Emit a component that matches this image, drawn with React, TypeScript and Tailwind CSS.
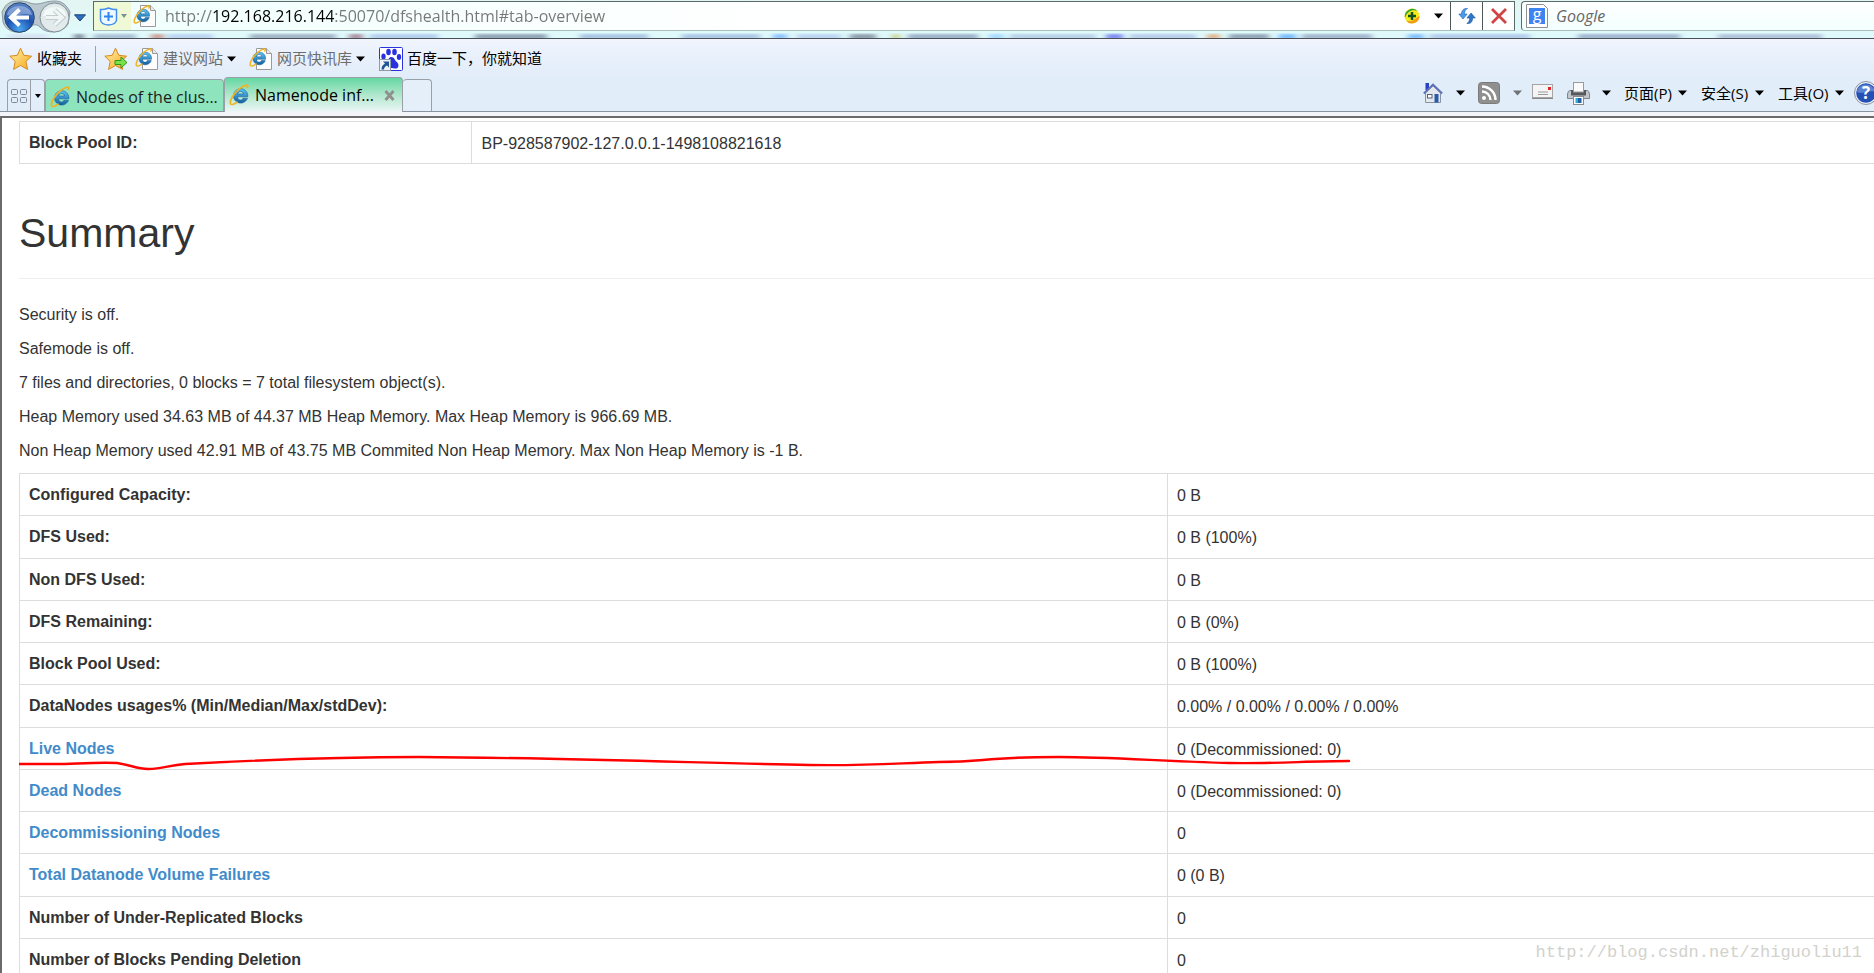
import type { ReactNode } from "react";

type Row = {
  label: string;
  value: string;
  href?: string;
};

const paragraphs = [
  "Security is off.",
  "Safemode is off.",
  "7 files and directories, 0 blocks = 7 total filesystem object(s).",
  "Heap Memory used 34.63 MB of 44.37 MB Heap Memory. Max Heap Memory is 966.69 MB.",
  "Non Heap Memory used 42.91 MB of 43.75 MB Commited Non Heap Memory. Max Non Heap Memory is -1 B.",
];

const rows: Row[] = [
  { label: "Configured Capacity:", value: "0 B" },
  { label: "DFS Used:", value: "0 B (100%)" },
  { label: "Non DFS Used:", value: "0 B" },
  { label: "DFS Remaining:", value: "0 B (0%)" },
  { label: "Block Pool Used:", value: "0 B (100%)" },
  { label: "DataNodes usages% (Min/Median/Max/stdDev):", value: "0.00% / 0.00% / 0.00% / 0.00%" },
  { label: "Live Nodes", value: "0 (Decommissioned: 0)", href: "#tab-datanode" },
  { label: "Dead Nodes", value: "0 (Decommissioned: 0)", href: "#tab-datanode" },
  { label: "Decommissioning Nodes", value: "0", href: "#tab-datanode" },
  { label: "Total Datanode Volume Failures", value: "0 (0 B)", href: "#tab-datanode-volume-failures" },
  { label: "Number of Under-Replicated Blocks", value: "0" },
  { label: "Number of Blocks Pending Deletion", value: "0" },
];

// blurred desktop behind the glass frame: x, width, colour
const glassSpots: [number, number, string][] = [
  [8, 40, "#d5dff0"], [74, 10, "#6f7a8c"], [94, 42, "#9fb4cd"], [151, 13, "#c98b80"],
  [167, 46, "#b3cdf0"], [250, 86, "#93a5bb"], [349, 14, "#a07a90"], [370, 68, "#a9c4ec"],
  [475, 72, "#8093a6"], [580, 68, "#9dbadf"], [682, 78, "#a0bce0"], [773, 14, "#7ab8ff"],
  [797, 44, "#b4cdf0"], [850, 26, "#7d8c9c"], [892, 8, "#c5cc80"], [908, 70, "#8ea3bf"],
  [989, 15, "#9ad4ff"], [1010, 86, "#b0c9e6"], [1106, 17, "#6b74f0"], [1130, 66, "#b0c4e8"],
  [1207, 13, "#e0a878"], [1229, 40, "#8193a8"], [1279, 17, "#62b0ff"], [1302, 70, "#95a9c4"],
  [1408, 16, "#6fb4ff"], [1430, 100, "#a8c2e8"], [1578, 102, "#93a8c8"], [1718, 104, "#a5b8d4"],
];

function Caret({ className = "text-black" }: { className?: string }) {
  return (
    <svg className={`shrink-0 ${className}`} width="9" height="6" viewBox="0 0 9 6" aria-hidden="true">
      <path d="M0 0.5h9L4.500 5.500z" fill="currentColor" />
    </svg>
  );
}

function IeMark() {
  return (
    <>
      <path d="M18.500 14.200A7.200 7.200 0 1 1 18.800 10.800V12.800H8.400C8.800 16.600 13 17 14 14.200zM8.500 10H14.500C14.200 6.600 9 6.600 8.500 10z" fill="url(#ieBlue)" stroke="#17629f" strokeWidth=".6" />
      <path d="M18 3.500C21 .2 15.500 .4 10.500 4.600C4.500 9.500 .2 17 1.600 19.800C2.500 21.400 5.500 20 8 18.200" fill="none" stroke="#f0b323" strokeWidth="1.700" strokeLinecap="round" />
    </>
  );
}

function IeIcon() {
  return (
    <svg className="shrink-0" width="22" height="22" viewBox="0 0 22 22" aria-hidden="true">
      <IeMark />
    </svg>
  );
}

function IePageIcon() {
  return (
    <svg className="shrink-0" width="24" height="24" viewBox="0 0 24 24" aria-hidden="true">
      <path d="M7.500 1.500h10l5 5v16h-15z" fill="#fdfdfd" stroke="#9a9a9a" />
      <path d="M17.500 1.500v5h5" fill="#e8e8e8" stroke="#9a9a9a" />
      <g transform="translate(0 1) scale(.88)">
        <IeMark />
      </g>
    </svg>
  );
}

function StarIcon({ arrow = false }: { arrow?: boolean }) {
  return (
    <svg className="shrink-0" width="24" height="24" viewBox="0 0 24 24" aria-hidden="true">
      <path d="M11.500 1.200L14.800 8.300L22.600 9.200L16.900 14.400L18.600 22.400L11.500 18.500L4.600 22.400L6.200 14.400L.8 9.200L8.300 8.300z" fill="url(#starGold)" stroke="#d58a1c" strokeLinejoin="round" />
      {arrow && (
        <path d="M11 13.500h6v-3.500l6 5.500l-6 5.500v-3.500h-6z" fill="#7be04a" stroke="#2f9a20" strokeLinejoin="round" />
      )}
    </svg>
  );
}

function BaiduIcon() {
  return (
    <svg className="shrink-0" width="24" height="24" viewBox="0 0 24 24" aria-hidden="true">
      <rect x=".5" y=".5" width="23" height="23" rx="1" fill="#fff" stroke="#2a32e0" />
      <g fill="#2a32e0">
        <ellipse cx="9.500" cy="5" rx="2.300" ry="3.200" />
        <ellipse cx="15.500" cy="5" rx="2.300" ry="3.200" />
        <ellipse cx="4.500" cy="9.500" rx="2.200" ry="2.900" />
        <ellipse cx="20" cy="10" rx="2.200" ry="2.900" />
        <path d="M12.300 10c3 0 3.200 3 5.500 5s2.400 6-.6 6.500c-2.200.4-3-.5-5-.5s-4 1-5.700-.5c-2-2-.6-4.500 1.500-6.300C9.800 12.600 9.800 10 12.300 10z" />
      </g>
      <rect x=".5" y="12.500" width="11" height="11" fill="#eef3fa" stroke="#8f99a8" />
      <path d="M4 14.500h6v6l-2-2c-2 1-3 2-3 4H2.500c0-3 1-4.500 3.500-6z" fill="#1f5796" />
    </svg>
  );
}

function ToolbarMenu({ children, className }: { children: ReactNode; className: string }) {
  return (
    <button type="button" className={`flex shrink-0 items-center justify-between ${className}`}>
      {children}
      <Caret />
    </button>
  );
}

function AddressRow() {
  return (
    <div className="relative flex h-[38px] items-start bg-gradient-to-b from-[#e4f5f2] to-[#dffafc]">
      <svg className="absolute inset-x-0 bottom-0 h-[7px] w-full" aria-hidden="true">
        <g filter="url(#glassBlur)" opacity=".8">
          {glassSpots.map(([x, w, fill]) => (
            <rect key={x} x={x} y="3" width={w} height="5" fill={fill} />
          ))}
        </g>
      </svg>

      <div className="relative flex h-[34px] w-[93px] shrink-0 items-start">
        <svg className="absolute inset-0" width="93" height="34" viewBox="0 0 93 34" aria-hidden="true">
          <path d="M2 12C6 2 12 1 19 1C28 1 30 4 36 4S46 1 55 1C63 1 67 6 70 12L68 24C62 34 46 34 40 27C36 24 34 24 31 27C22 36 6 33 3 22z" fill="#b9c7ce" stroke="#8c9ba5" />
        </svg>
        <button type="button" aria-label="Back" className="relative ml-1 mt-0.5">
          <svg width="31" height="31" viewBox="0 0 31 31" aria-hidden="true">
            <circle cx="15.500" cy="15.500" r="14.800" fill="url(#backBlue)" stroke="#2b4568" />
            <path d="M3 13C5 1 26 1 28 13C20 10 11 16 3 13z" fill="#fff" opacity=".35" />
            <path d="M15.500 7.500L7 15.500L15.500 23.500M8 15.500H25" fill="none" stroke="#fff" strokeWidth="4" />
          </svg>
        </button>
        <button type="button" aria-label="Forward" className="relative ml-1 mt-0.5">
          <svg width="31" height="31" viewBox="0 0 31 31" aria-hidden="true">
            <circle cx="15.500" cy="15.500" r="14.500" fill="#e2eaec" stroke="#808d93" />
            <path d="M4 14C5 2 26 2 27 14z" fill="#f3f8f8" />
            <path d="M15.500 8L23.500 15.500L15.500 23M22.500 15.500H7" fill="none" stroke="#c3cccf" strokeWidth="5" />
            <path d="M15.500 8L23.500 15.500L15.500 23M22.500 15.500H7" fill="none" stroke="#f0f5f5" strokeWidth="3" />
          </svg>
        </button>
        <button type="button" aria-label="Recent pages" className="relative ml-1 mt-3.5">
          <svg width="12" height="8" viewBox="0 0 12 8" aria-hidden="true">
            <path d="M.5 .8h11L6 7z" fill="#2f6fc0" stroke="#173f78" strokeLinejoin="round" />
          </svg>
        </button>
      </div>

      <div className="relative mt-px flex h-[30px] min-w-0 flex-1 items-center border border-[#5b6b6b] border-b-[#a9bdb9] bg-gradient-to-r from-[#effffd] via-white to-white">
        <button type="button" aria-label="Site safety" className="flex h-full w-[37px] shrink-0 items-center justify-between bg-[#eff9d6] pl-[5px] pr-1">
          <svg width="19" height="19" viewBox="0 0 19 19" aria-hidden="true">
            <path d="M1.500 2.500C5 3 7 2 9.500 1C12 2 14 3 17.500 2.500V13Q17 17.500 9.500 18Q2 17.500 1.500 13z" fill="#eef8ff" stroke="#3f8ef0" strokeWidth="1.500" />
            <path d="M9.500 5v9M5 9.500h9" stroke="#2f84ee" strokeWidth="2" />
          </svg>
          <svg width="6" height="4" viewBox="0 0 6 4" aria-hidden="true">
            <path d="M0 0h6L3 4z" fill="#819191" />
          </svg>
        </button>
        <div className="ml-0.5 flex shrink-0">
          <IePageIcon />
        </div>
        <input
          type="text"
          aria-label="Address"
          defaultValue="http://192.168.216.144:50070/dfshealth.html#tab-overview"
          className="ml-2 h-[26px] min-w-0 flex-1 bg-[linear-gradient(to_right,#777_0,#777_47px,#000_47px,#000_170px,#777_170px)] bg-clip-text text-base text-transparent caret-black outline-none"
        />
        <button type="button" aria-label="Compatibility view" className="shrink-0">
          <svg width="16" height="16" viewBox="0 0 16 16" aria-hidden="true">
            <circle cx="8" cy="8" r="7.500" fill="#f5ec1c" />
            <path d="M2 12.500A7.500 7.500 0 0 0 15.500 8C12 9 10 15 2 12.500z" fill="#f29a1a" />
            <path d="M1 10A7.500 7.500 0 0 1 13.500 3C9 1 3 3 1 10z" fill="#35a432" />
            <path d="M8 4v8M4 8h8" stroke="#14531d" strokeWidth="2.500" />
          </svg>
        </button>
        <button type="button" aria-label="Show address history" className="flex h-full w-[30px] shrink-0 items-center justify-end pr-[7px]">
          <Caret />
        </button>
        <button type="button" aria-label="Refresh" className="flex h-full w-8 shrink-0 items-center justify-center border-l border-[#4d5858]">
          <svg width="18" height="18" viewBox="0 0 18 18" aria-hidden="true">
            <path d="M9.500 1.500C5.500 1 3.500 3.500 3.500 7H.8L5 12L9.200 7H6.500C6.500 4.500 7.200 2.800 9.500 1.500z" fill="#4a9be8" stroke="#1f66b5" strokeWidth=".6" />
            <path d="M8.800 16.500C13 17 14.600 14.500 14.600 11H17.300L13.100 6L8.900 11H11.600C11.600 13.500 11 15.200 8.800 16.500z" fill="#2f78c8" stroke="#1b559d" strokeWidth=".6" />
          </svg>
        </button>
        <button type="button" aria-label="Stop" className="flex h-full w-8 shrink-0 items-center justify-center border-l border-[#4d5858]">
          <svg width="18" height="18" viewBox="0 0 18 18" aria-hidden="true">
            <path d="M2 2L16 16M16 2L2 16" stroke="#cf4444" strokeWidth="2.800" />
          </svg>
        </button>
      </div>

      <div className="relative ml-1.5 mt-px flex h-[30px] w-[353px] shrink-0 items-center rounded-l-sm border border-r-0 border-[#5b6b6b] border-b-[#a9bdb9] bg-gradient-to-b from-white to-[#f2fffe] pl-1">
        <svg className="shrink-0" width="22" height="24" viewBox="0 0 22 24" aria-hidden="true">
          <path d="M.5 .5h17l4 4v19h-21z" fill="#fff" stroke="#8f8f8f" />
          <rect x="3" y="4" width="16" height="16" fill="#3f82f1" />
          <text x="11" y="16" textAnchor="middle" fontSize="16" fill="#fff" fontFamily="Open Sans, sans-serif">g</text>
        </svg>
        <input
          type="search"
          aria-label="Search"
          placeholder="Google"
          className="ml-2 min-w-0 flex-1 bg-transparent text-base italic outline-none placeholder:text-[#666]"
        />
      </div>
    </div>
  );
}

function FavoritesBar() {
  return (
    <div className="flex h-10 items-center border-t border-[#4b4f55] bg-gradient-to-b from-[#f1f5fd] via-[#e8f0fb] to-[#e1edf9] pl-[9px] text-[15px] text-[#6d6d6d]">
      <button type="button" className="flex items-center gap-1 text-black">
        <StarIcon />
        收藏夹
      </button>
      <div className="ml-[13px] h-[26px] w-px bg-[#9aa2ad]" />
      <button type="button" aria-label="Add to favorites bar" className="ml-2">
        <StarIcon arrow />
      </button>
      <button type="button" className="ml-[7px] flex items-center gap-1">
        <IePageIcon />
        建议网站
        <Caret />
      </button>
      <button type="button" className="ml-[13px] flex items-center gap-1">
        <IePageIcon />
        网页快讯库
        <Caret />
      </button>
      <a href="#baidu" className="ml-[14px] flex items-center gap-1 text-black">
        <BaiduIcon />
        百度一下，你就知道
      </a>
    </div>
  );
}

function CommandBar() {
  return (
    <div className="-mr-1 ml-auto flex h-9 shrink-0 items-center text-[15px] text-black">
      <ToolbarMenu className="w-[42px]">
        <svg width="20" height="22" viewBox="0 0 20 22" aria-hidden="true">
          <path d="M2.500 1h3.500v7H2.500z" fill="#2840c8" />
          <path d="M2.500 11L10 4L17.500 11V20.500H2.500z" fill="#e3e7ee" stroke="#8a93a6" />
          <path d="M.8 11.500L10 2.500L19.200 11.500" fill="none" stroke="#5f70b8" strokeWidth="1.800" />
          <rect x="11.500" y="12" width="4" height="8.500" fill="#2a5ba8" />
          <rect x="4.500" y="12.500" width="4.500" height="3.500" fill="#fff" stroke="#55606f" />
        </svg>
      </ToolbarMenu>
      <button type="button" aria-label="Feeds" className="ml-[13px] flex w-11 items-center justify-between">
        <svg width="22" height="22" viewBox="0 0 22 22" aria-hidden="true">
          <rect x=".5" y=".5" width="21" height="21" rx="3" fill="#8f8f8f" stroke="#7b7b7b" />
          <circle cx="6" cy="16" r="2" fill="#fff" />
          <path d="M4 9.500A8.500 8.500 0 0 1 12.500 18M4 4.500A13.500 13.500 0 0 1 17.500 18" fill="none" stroke="#fff" strokeWidth="2.400" />
        </svg>
        <Caret className="text-[#6f7377]" />
      </button>
      <button type="button" aria-label="Read mail" className="-mt-1 ml-2.5">
        <svg width="21" height="15" viewBox="0 0 21 15" aria-hidden="true">
          <rect x=".5" y=".5" width="20" height="13" fill="#f4f4f4" stroke="#a5a5a5" />
          <path d="M0 14.500h21" stroke="#888" />
          <rect x="16" y="3" width="3" height="3" fill="#e02626" />
          <path d="M6 8h10M6 10.500h10" stroke="#9a9a9a" />
        </svg>
      </button>
      <ToolbarMenu className="ml-3.5 w-[44px]">
        <svg width="23" height="23" viewBox="0 0 23 23" aria-hidden="true">
          <path d="M.5 12Q1 8.500 3 8.500H20Q22 8.500 22.500 12V16.500H.5z" fill="#c3c6ca" stroke="#80858a" />
          <path d="M4 8h15v5.500H4z" fill="#55595e" />
          <rect x="6.500" y=".5" width="10" height="9.500" fill="#fafafa" stroke="#9b9b9b" />
          <rect x="6.500" y="14.500" width="10" height="8" fill="#fff" stroke="#8b8b8b" />
          <path d="M8.500 16h2.500v5H8.500z" fill="#2daed8" />
          <path d="M11 16h3.500v5H11z" fill="#215fa8" />
        </svg>
      </ToolbarMenu>
      <ToolbarMenu className="ml-[13px] w-[63px]">页面(P)</ToolbarMenu>
      <ToolbarMenu className="ml-3.5 w-[63px]">安全(S)</ToolbarMenu>
      <ToolbarMenu className="ml-3.5 w-[66px]">工具(O)</ToolbarMenu>
      <button type="button" aria-label="Help" className="ml-2.5">
        <svg width="24" height="24" viewBox="0 0 24 24" aria-hidden="true">
          <circle cx="12" cy="12" r="11.500" fill="#e9eef6" stroke="#8c94a0" />
          <circle cx="12" cy="12" r="9.800" fill="#2350b4" />
          <path d="M3 11C4 1 20 1 21 11C15 8 9 14 3 11z" fill="#7ea2e6" opacity=".6" />
          <text x="12" y="18" textAnchor="middle" fontSize="17" fontWeight="bold" fill="#fff" fontFamily="Open Sans, sans-serif">?</text>
        </svg>
      </button>
    </div>
  );
}

function TabRow() {
  return (
    <div className="flex h-[34px] items-end border-b border-[#8b93a3] bg-[#e1edf9] pl-[7px]">
      <div className="flex h-8 w-[38px] shrink-0 rounded-t-sm border border-b-0 border-[#9a9fa8]">
        <button type="button" aria-label="Quick tabs" className="flex w-[22px] items-center justify-center">
          <svg width="16" height="14" viewBox="0 0 16 14" fill="none" stroke="#7d8798" aria-hidden="true">
            <rect x=".5" y=".5" width="6" height="5" rx="1" />
            <rect x="9.500" y=".5" width="6" height="5" rx="1" />
            <rect x=".5" y="8.500" width="6" height="5" rx="1" />
            <rect x="9.500" y="8.500" width="6" height="5" rx="1" />
          </svg>
        </button>
        <button type="button" aria-label="Tab list" className="flex flex-1 items-center justify-center border-l border-[#9a9fa8]">
          <svg width="6" height="4" viewBox="0 0 6 4" aria-hidden="true">
            <path d="M0 0h6L3 4z" fill="#000" />
          </svg>
        </button>
      </div>
      <button type="button" className="flex h-8 w-[179px] shrink-0 items-center gap-1 rounded-t-sm border border-b-0 border-[#9a9fa8] bg-[#8ee4bd] pl-1 pt-0.5 text-left text-base text-[#1d1d1d]">
        <IeIcon />
        Nodes of the clus...
      </button>
      <div className="-mb-px flex h-[35px] w-[179px] shrink-0 items-center rounded-t-sm border border-b-0 border-[#9a9fa8] bg-gradient-to-b from-[#62d7a2] to-[#eef6f8] pl-1 pr-[7px]">
        <button type="button" className="flex flex-1 items-center gap-1 text-left text-base text-black">
          <IeIcon />
          Namenode inf...
        </button>
        <button type="button" aria-label="Close tab">
          <svg width="11" height="11" viewBox="0 0 11 11" aria-hidden="true">
            <path d="M1.500 1L9.500 10M9.500 1L1.500 10" stroke="#8f8f8f" strokeWidth="2.800" />
          </svg>
        </button>
      </div>
      <button type="button" aria-label="New tab" className="h-8 w-[29px] shrink-0 rounded-t-sm border border-b-0 border-l-0 border-[#9a9fa8] bg-[#e4effa]" />
      <CommandBar />
    </div>
  );
}

export default function App() {
  return (
    <div className="flex h-screen flex-col overflow-hidden bg-white">
      <svg className="absolute" width="0" height="0" aria-hidden="true">
        <defs>
          <linearGradient id="ieBlue" x1="0" y1="0" x2="0" y2="1">
            <stop offset="0" stopColor="#5fc4f2" />
            <stop offset="1" stopColor="#125f9f" />
          </linearGradient>
          <linearGradient id="starGold" x1="0" y1="0" x2="1" y2="1">
            <stop offset="0" stopColor="#fff1a8" />
            <stop offset="1" stopColor="#f7a81c" />
          </linearGradient>
          <radialGradient id="backBlue" cx=".5" cy=".9" r=".9">
            <stop offset="0" stopColor="#4aa8f0" />
            <stop offset=".5" stopColor="#1c51b0" />
            <stop offset="1" stopColor="#5b86c8" />
          </radialGradient>
          <filter id="glassBlur">
            <feGaussianBlur stdDeviation="3 1" />
          </filter>
        </defs>
      </svg>

      <header className="shrink-0 font-['Open_Sans','Noto_Sans_CJK_SC',sans-serif]">
        <AddressRow />
        <FavoritesBar />
        <TabRow />
        <div className="h-1 bg-[#f4f4fb]" />
      </header>

      <main className="min-h-0 flex-1 overflow-hidden border-l-2 border-t-2 border-[#6b6b6b] bg-white pl-[17px] font-['Liberation_Sans',Arial,sans-serif] text-base leading-[23px] text-[#333]">
        <table className="mt-[3px] h-[43px] w-full border-collapse border border-r-0 border-[#ddd]">
          <tbody>
            <tr>
              <th className="w-[24.4%] border-r border-[#ddd] px-[9px] text-left font-bold">Block Pool ID:</th>
              <td className="px-[9px] pt-0.5">BP-928587902-127.0.0.1-1498108821618</td>
            </tr>
          </tbody>
        </table>

        <div className="mb-6 mt-[46px] border-b border-[#eee] pb-[22px]">
          <h1 className="text-[41px] leading-[46px]">Summary</h1>
        </div>

        {paragraphs.map((text) => (
          <p key={text} className="mb-[11px]">{text}</p>
        ))}

        <div className="relative">
          <table className="h-[508px] w-full border-collapse border border-r-0 border-[#ddd]">
            <tbody>
              {rows.map((row) => (
                <tr key={row.label} className="border-b border-[#ddd]">
                  <th className="w-[61.9%] border-r border-[#ddd] px-[9px] text-left font-bold">
                    {row.href ? (
                      <a href={row.href} className="text-[#428bca]">{row.label}</a>
                    ) : (
                      row.label
                    )}
                  </th>
                  <td className="px-[9px] pt-0.5">{row.value}</td>
                </tr>
              ))}
            </tbody>
          </table>
          {/* hand-drawn marker under the Live Nodes row */}
          <svg className="pointer-events-none absolute left-0 top-[280px]" width="1332" height="20" viewBox="0 0 1332 20" aria-hidden="true">
            <path
              d="M0 11H46C70 10 84 9 98 10C112 12 118 16 129 16C144 16 150 12 166 11C240 7 320 4 400 4C560 5 680 10 790 12C850 13 880 10 920 9C970 9 960 4 1040 4C1090 4 1140 8 1210 10C1250 11 1290 8 1330 8"
              fill="none"
              stroke="#f00"
              strokeWidth="2.400"
              strokeLinecap="round"
            />
          </svg>
        </div>
      </main>

      <div className="pointer-events-none absolute bottom-2 right-3 font-['Liberation_Mono',monospace] text-[17px] text-[#d2d2cc]">
        http://blog.csdn.net/zhiguoliu11
      </div>
    </div>
  );
}
